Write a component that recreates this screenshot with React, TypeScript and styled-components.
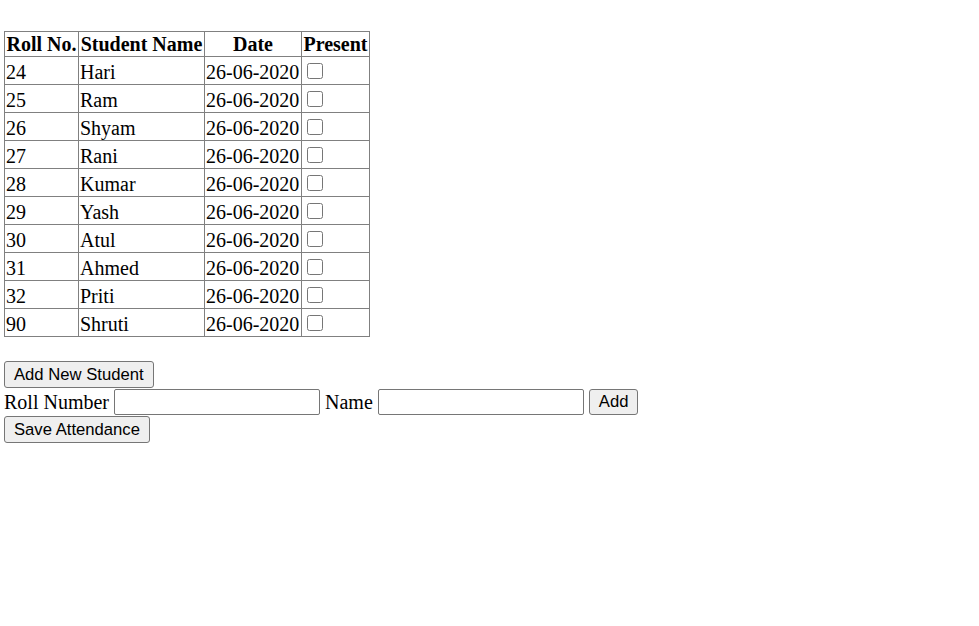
import React from 'react';
import styled, { createGlobalStyle } from 'styled-components';

const students = [
  { roll: 24, name: 'Hari' },
  { roll: 25, name: 'Ram' },
  { roll: 26, name: 'Shyam' },
  { roll: 27, name: 'Rani' },
  { roll: 28, name: 'Kumar' },
  { roll: 29, name: 'Yash' },
  { roll: 30, name: 'Atul' },
  { roll: 31, name: 'Ahmed' },
  { roll: 32, name: 'Priti' },
  { roll: 90, name: 'Shruti' },
];

const GlobalStyle = createGlobalStyle`
  body {
    margin: 0;
    background: #fff;
    color: #000;
    font-family: "Liberation Serif", "Times New Roman", serif;
    font-size: 20px;
  }
`;

const Page = styled.div`
  padding: 31px 0 0 4px;
`;

const Table = styled.table`
  border-collapse: collapse;
  line-height: 23px;
`;

const HeaderCell = styled.th<{ $width: number }>`
  width: ${(p) => p.$width}px;
  height: 25px;
  padding: 0 1px;
  border: 1px solid #808080;
  font-weight: bold;
  text-align: center;
  box-sizing: border-box;
  white-space: nowrap;
`;

const Cell = styled.td`
  height: 28px;
  padding: 3px 1px 0;
  border: 1px solid #808080;
  text-align: left;
  box-sizing: border-box;
  white-space: nowrap;
`;

const Check = styled.input`
  width: 16px;
  height: 16px;
  margin: 0 0 0 4px;
  vertical-align: 0;
`;

const Controls = styled.div`
  display: flex;
  flex-direction: column;
  align-items: flex-start;
  margin-top: 24px;
`;

const FormRow = styled.div`
  display: flex;
  align-items: center;
  gap: 5px;
  height: 28px;
`;

const Button = styled.button<{ $compact?: boolean }>`
  height: ${(p) => (p.$compact ? 26 : 27)}px;
  padding: 0 9px;
  font-family: "Liberation Sans", Arial, sans-serif;
  font-size: 16.67px;
  color: #000;
  background: #efefef;
  border: 1px solid #767676;
  border-radius: 3px;
  box-sizing: border-box;
`;

const Input = styled.input`
  width: 206px;
  height: 26px;
  padding: 1px 3px;
  border: 1px solid #767676;
  border-radius: 2px;
  box-sizing: border-box;
  font-size: 16px;
`;

const Label = styled.span`
  line-height: 23px;
`;

export default function App() {
  return (
    <Page>
      <GlobalStyle />
      <Table>
        <thead>
          <tr>
            <HeaderCell $width={74}>Roll No.</HeaderCell>
            <HeaderCell $width={126}>Student Name</HeaderCell>
            <HeaderCell $width={97}>Date</HeaderCell>
            <HeaderCell $width={68}>Present</HeaderCell>
          </tr>
        </thead>
        <tbody>
          {students.map((s) => (
            <tr key={s.roll}>
              <Cell>{s.roll}</Cell>
              <Cell>{s.name}</Cell>
              <Cell>26-06-2020</Cell>
              <Cell>
                <Check type="checkbox" />
              </Cell>
            </tr>
          ))}
        </tbody>
      </Table>
      <Controls>
        <Button>Add New Student</Button>
        <FormRow>
          <Label>Roll Number</Label>
          <Input type="text" />
          <Label>Name</Label>
          <Input type="text" />
          <Button $compact>Add</Button>
        </FormRow>
        <Button>Save Attendance</Button>
      </Controls>
    </Page>
  );
}
